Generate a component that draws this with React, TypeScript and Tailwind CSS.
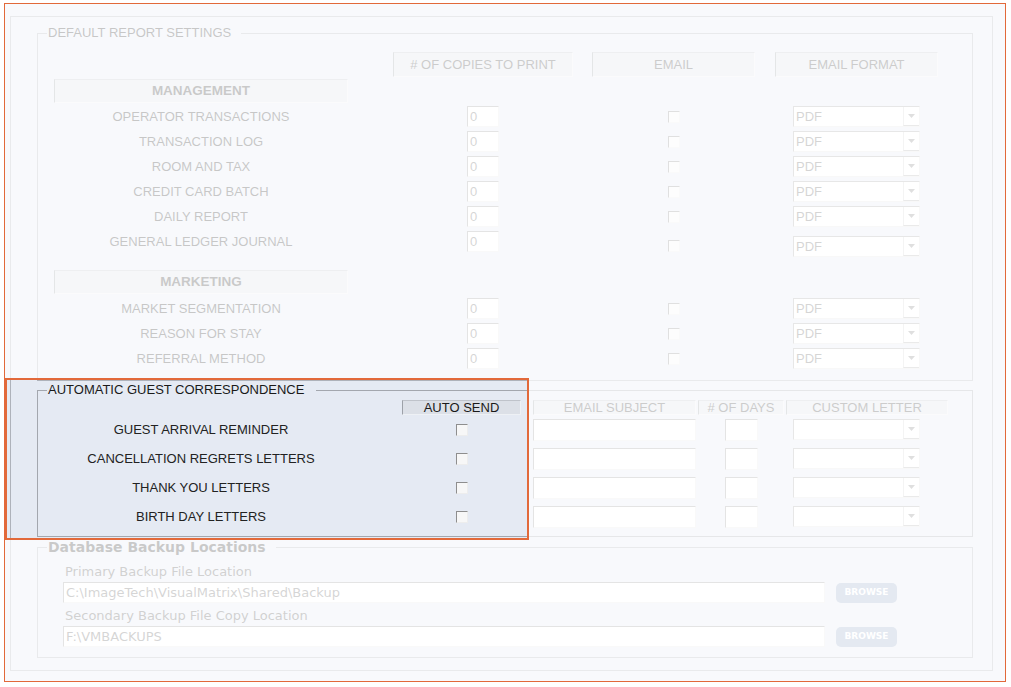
import React from 'react';

const reportRows = [
  'OPERATOR TRANSACTIONS',
  'TRANSACTION LOG',
  'ROOM AND TAX',
  'CREDIT CARD BATCH',
  'DAILY REPORT',
  'GENERAL LEDGER JOURNAL',
];

const marketingRows = ['MARKET SEGMENTATION', 'REASON FOR STAY', 'REFERRAL METHOD'];

const letters = [
  'GUEST ARRIVAL REMINDER',
  'CANCELLATION REGRETS LETTERS',
  'THANK YOU LETTERS',
  'BIRTH DAY LETTERS',
];

function Field({ className = '', value = '' }: { className?: string; value?: string }) {
  return (
    <div
      className={`bg-white border border-t-[#9c9c9c] border-l-[#9c9c9c] border-r-[#e9e9e9] border-b-[#e9e9e9] pl-[2px] text-[#666] overflow-hidden whitespace-nowrap ${className}`}
    >
      {value}
    </div>
  );
}

function Check() {
  return (
    <div className="w-[12px] h-[12px] border border-t-[#8e8e8e] border-l-[#8e8e8e] border-r-[#ededed] border-b-[#ededed] bg-[#f7f7f7]" />
  );
}

function Combo({ value = '' }: { value?: string }) {
  return (
    <div className="w-[127px] h-[21px] bg-white flex border border-t-[#a8a8a8] border-l-[#a8a8a8] border-r-[#e4e4e4] border-b-[#e4e4e4]">
      <div className="flex-1 pl-[2px] text-[13px] leading-[19px] text-[#666]">{value}</div>
      <div className="w-[16px] flex items-center justify-center border-l border-b border-l-[#d6d6d6] border-b-[#b0b0b0]">
        <svg width="7" height="4" viewBox="0 0 7 4">
          <path d="M0 0h7L3.5 4z" fill="#8a8a8a" />
        </svg>
      </div>
    </div>
  );
}

function Head({ children, className = '' }: { children?: React.ReactNode; className?: string }) {
  return (
    <div
      className={`flex items-center justify-center bg-[#dce0e7] border border-t-[#bfc3ca] border-l-[#9da1a8] border-r-[#eef1f5] border-b-[#eef1f5] ${className}`}
    >
      {children}
    </div>
  );
}

function ReportRow({ label, shift = false }: { label: string; shift?: boolean }) {
  return (
    <div className="flex h-[25px] items-center">
      <div className="w-[294px] text-center leading-[16px]">{label}</div>
      <div className="ml-[45px] w-[180px] flex justify-center">
        <Field className="w-[32px] h-[21px] leading-[19px]" value="0" />
      </div>
      <div className={`ml-[19px] w-[163px] flex justify-center ${shift ? 'mt-[9px]' : ''}`}>
        <Check />
      </div>
      <div className={`ml-[20px] w-[163px] flex justify-center ${shift ? 'mt-[9px]' : ''}`}>
        <Combo value="PDF" />
      </div>
    </div>
  );
}

function LetterRow({ label, dim }: { label: string; dim: boolean }) {
  return (
    <div className="flex h-[29px] items-center">
      <div className="w-[294px] text-center leading-[16px] text-[#222]">{label}</div>
      <div className="ml-[54px] w-[119px] flex justify-center">
        <Check />
      </div>
      <div className="ml-[12px] w-[163px]">
        <Field className={`w-[163px] h-[22px] ${dim ? 'bg-[#eceef2]' : ''}`} />
      </div>
      <div className="ml-[2px] w-[86px] flex justify-center">
        <Field className="w-[33px] h-[22px]" />
      </div>
      <div className="ml-[2px] w-[162px] pl-[7px]">
        <Combo />
      </div>
    </div>
  );
}

export default function App() {
  return (
    <div className="relative w-[1011px] h-[687px] bg-white overflow-hidden pt-[4px] pl-[5px] font-['Liberation_Sans',Arial,sans-serif] text-[13px] text-[#333]">
      <div className="w-[1000px] h-[677px] bg-[#e5eaf3] pt-[12px] pl-[5px]">
        <div className="w-[983px] h-[655px] border border-[#aeb2ba] pt-[8px] pl-[26px]">
          {/* Default report settings */}
          <fieldset className="w-[936px] h-[356px] border border-[#aeb2ba] pl-[9px] pt-[11px]">
            <legend className="pl-[1px] pr-[10px] leading-[16px]">DEFAULT REPORT SETTINGS</legend>
            <div className="ml-[7px]">
              <div className="flex h-[25px]">
                <div className="w-[294px]" />
                <Head className="ml-[45px] w-[180px] text-[#444]"># OF COPIES TO PRINT</Head>
                <Head className="ml-[19px] w-[163px] text-[#444]">EMAIL</Head>
                <Head className="ml-[20px] w-[163px] text-[#444]">EMAIL FORMAT</Head>
              </div>
              <Head className="mt-[2px] w-[294px] h-[24px] font-bold text-[13.5px] text-[#3a3a3a]">MANAGEMENT</Head>
              <div className="mt-[1px]">
                {reportRows.map((r, i) => (
                  <ReportRow key={r} label={r} shift={i === 5} />
                ))}
              </div>
              <Head className="mt-[16px] w-[294px] h-[24px] font-bold text-[13.5px] text-[#3a3a3a]">MARKETING</Head>
              <div className="mt-[2px]">
                {marketingRows.map((r) => (
                  <ReportRow key={r} label={r} />
                ))}
              </div>
            </div>
          </fieldset>

          {/* Automatic guest correspondence */}
          <fieldset className="mt-[1px] w-[936px] h-[155px] border border-[#a3a7ae] pl-[9px] pt-[2px]">
            <legend className="pl-[1px] pr-[12px] leading-[16px] text-[#1a1a1a]">AUTOMATIC GUEST CORRESPONDENCE</legend>
            <div className="ml-[7px]">
              <div className="flex h-[15px] leading-[15px]">
                <div className="w-[294px]" />
                <Head className="ml-[54px] w-[119px] text-[#1a1a1a]">AUTO SEND</Head>
                <Head className="ml-[12px] w-[163px] text-[#444]">EMAIL SUBJECT</Head>
                <Head className="ml-[2px] w-[86px] text-[#444]"># OF DAYS</Head>
                <Head className="ml-[2px] w-[162px] text-[#444]">CUSTOM LETTER</Head>
              </div>
              {letters.map((l, i) => (
                <LetterRow key={l} label={l} dim={i < 2} />
              ))}
            </div>
          </fieldset>

          {/* Database backup */}
          <fieldset className="mt-[1px] w-[936px] h-[120px] border border-[#aeb2ba] pl-[9px]">
            <legend className="pl-[1px] pr-[10px] font-['DejaVu_Sans',sans-serif] font-bold text-[14px] leading-[18px] text-[#3a3a3a]">
              Database Backup Locations
            </legend>
            <div className="ml-[16px] pt-[8px] font-['DejaVu_Sans',sans-serif] text-[13px] text-[#555]">
              <div className="pl-[2px] leading-[16px]">Primary Backup File Location</div>
              <div className="mt-[2px] flex items-center">
                <Field className="w-[762px] h-[21px] leading-[19px]" value="C:\ImageTech\VisualMatrix\Shared\Backup" />
                <button className="ml-[11px] w-[61px] h-[20px] rounded-[5px] bg-[#9aadcb] text-white text-[9px] font-bold">
                  BROWSE
                </button>
              </div>
              <div className="mt-[5px] pl-[2px] leading-[16px]">Secondary Backup File Copy Location</div>
              <div className="mt-[2px] flex items-center">
                <Field className="w-[762px] h-[21px] leading-[19px]" value="F:\VMBACKUPS" />
                <button className="ml-[11px] w-[61px] h-[20px] rounded-[5px] bg-[#9aadcb] text-white text-[9px] font-bold">
                  BROWSE
                </button>
              </div>
            </div>
          </fieldset>
        </div>
      </div>

      {/* fade veil around the highlighted section */}
      <div className="absolute left-0 top-0 w-[1011px] h-[378px] bg-[rgba(255,255,255,0.73)]" />
      <div className="absolute left-0 top-[540px] w-[1011px] h-[147px] bg-[rgba(255,255,255,0.73)]" />
      <div className="absolute left-0 top-[378px] w-[5px] h-[162px] bg-[rgba(255,255,255,0.73)]" />
      <div className="absolute left-[529px] top-[378px] w-[482px] h-[162px] bg-[rgba(255,255,255,0.73)]" />

      {/* annotation frames */}
      <div className="absolute left-[4px] top-[3px] w-[1002px] h-[679px] border-[1.5px] border-[#e2693a] pointer-events-none" />
      <div className="absolute left-[5px] top-[378px] w-[524px] h-[162px] border-2 border-[#e2693a] pointer-events-none" />
    </div>
  );
}
